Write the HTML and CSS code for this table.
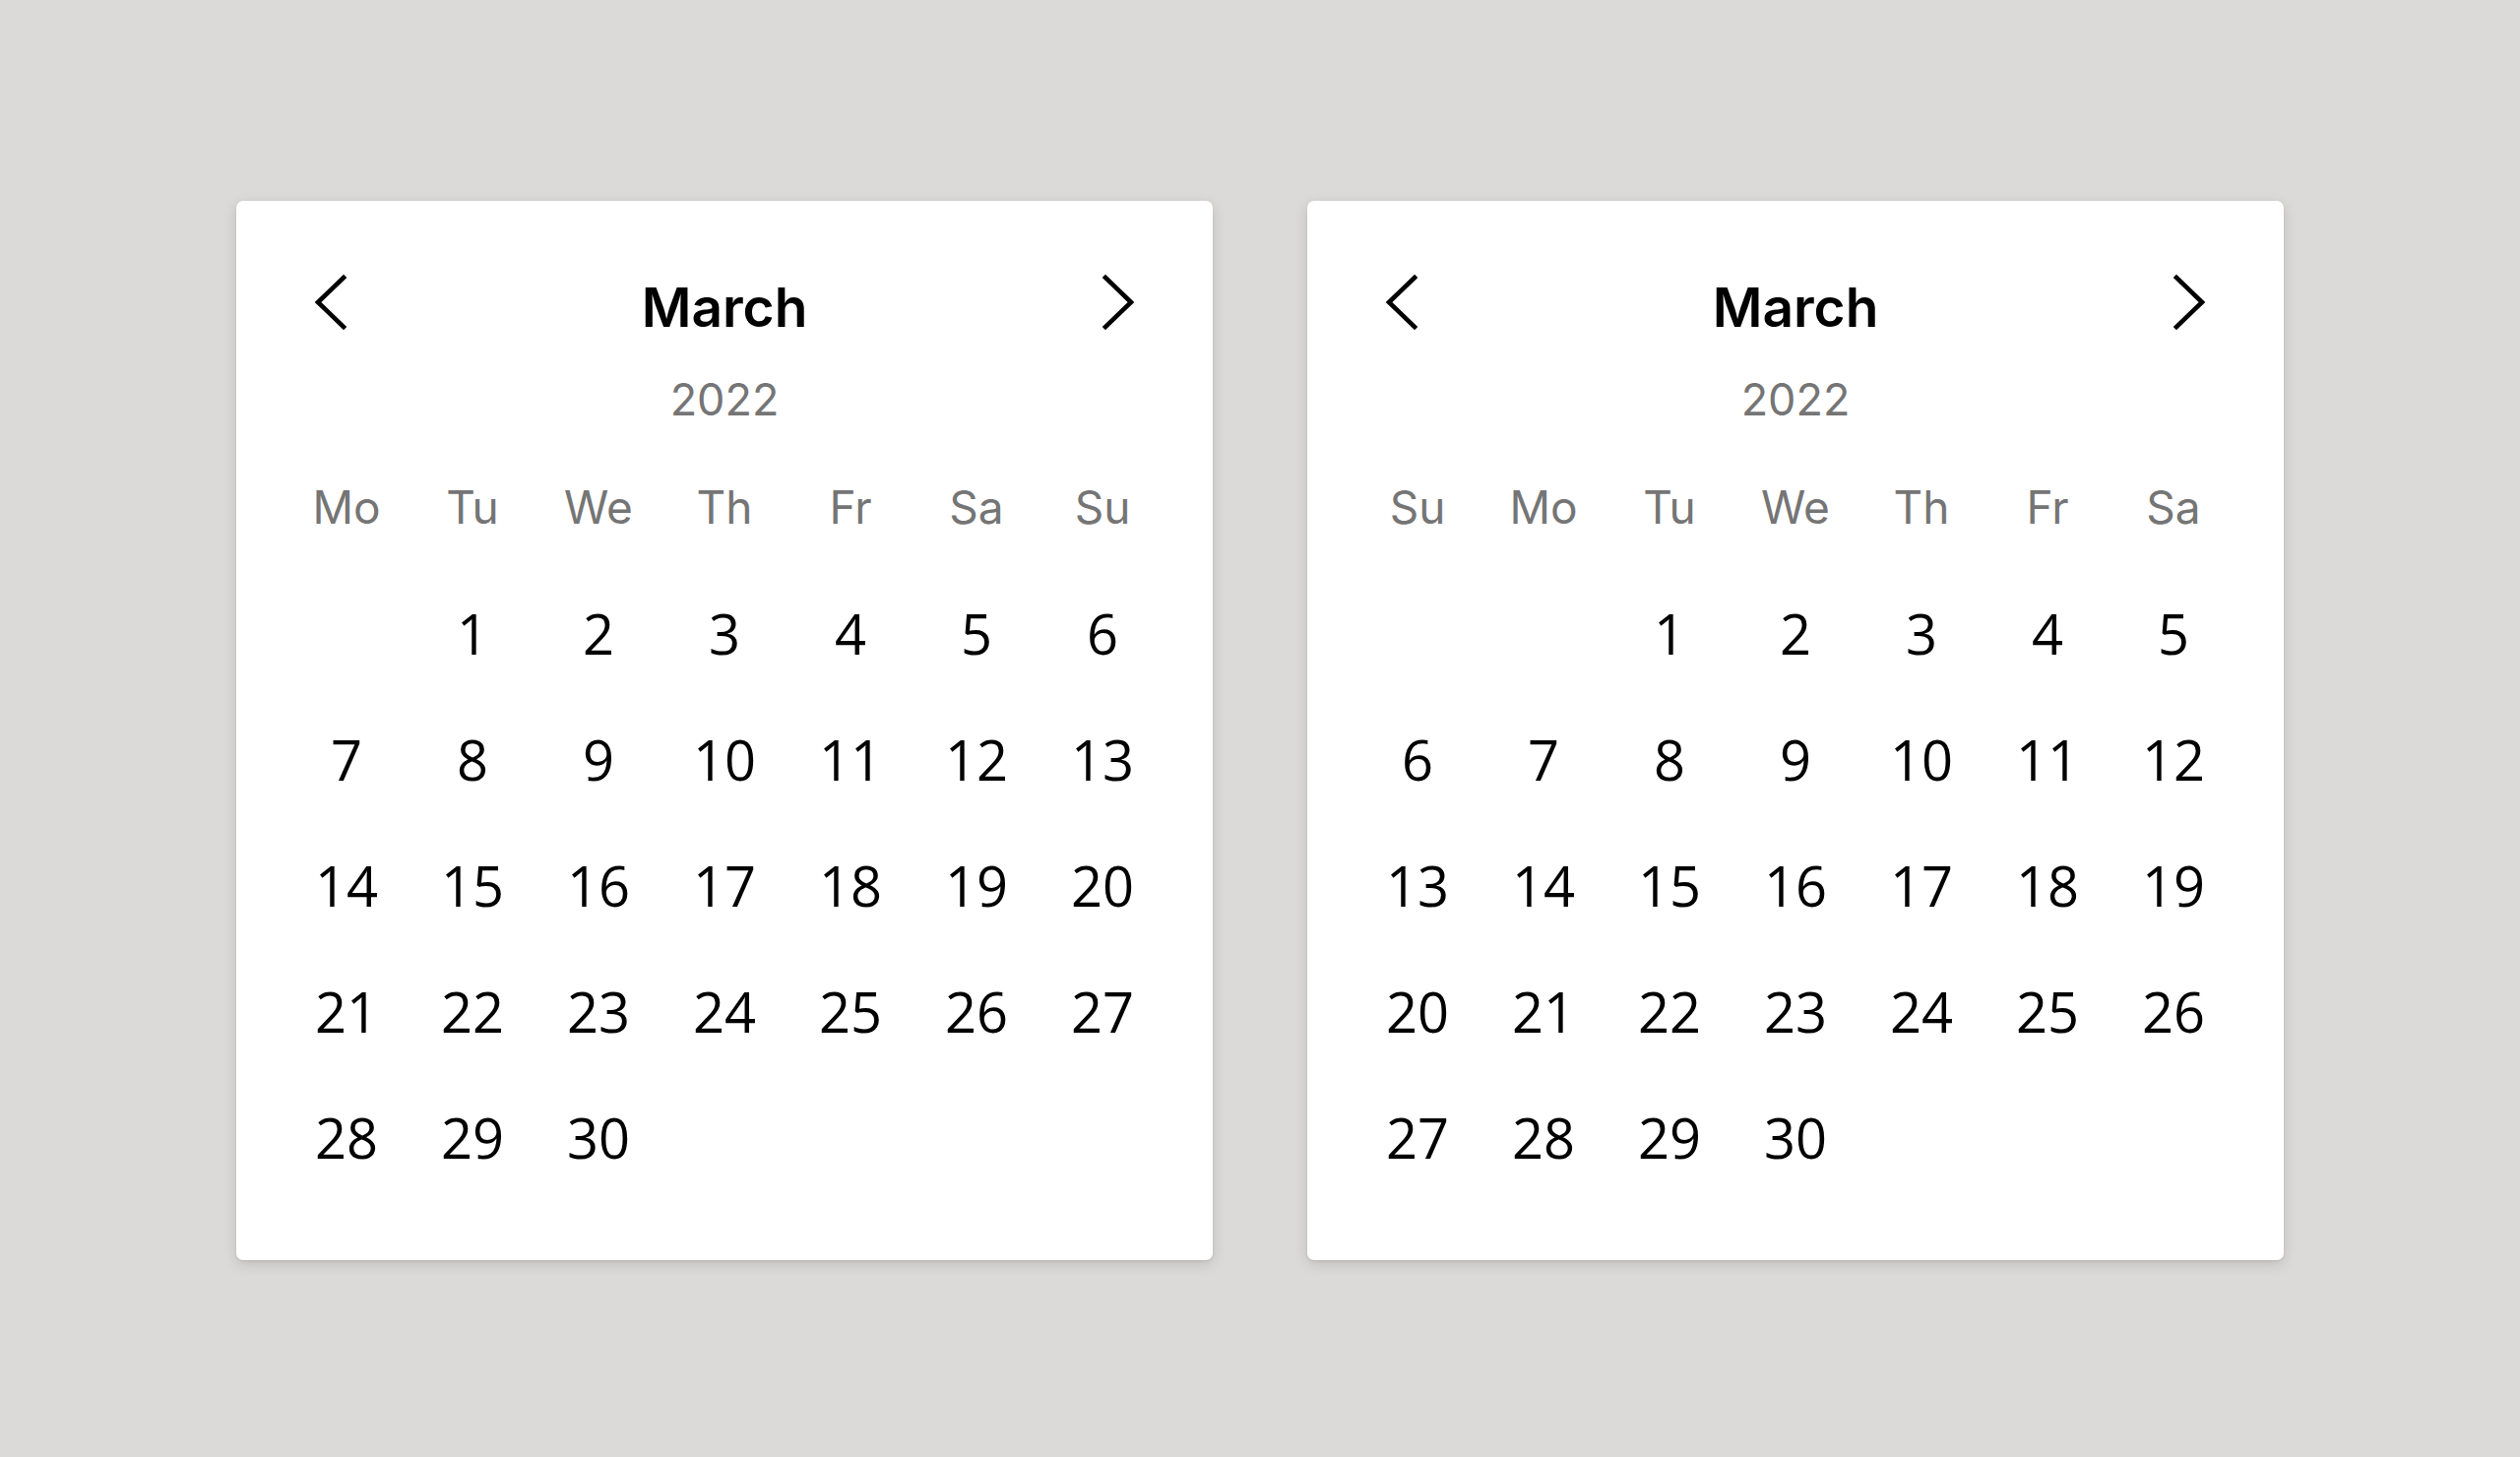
FILE: index.html
```html
<!DOCTYPE html>
<html lang="en">
<head>
<meta charset="utf-8">
<title>Calendars</title>
<link rel="stylesheet" href="styles.css">
</head>
<body>
<main class="stage">
  <section class="card">
    <header class="head">
      <button class="nav" aria-label="Previous month">
        <svg width="34" height="58" viewBox="0 0 34 58"><path d="M30 4 L4 29 L30 54" fill="none" stroke="#000" stroke-width="4.6" stroke-linecap="square" stroke-linejoin="miter"/></svg>
      </button>
      <div class="title">
        <div class="month">March</div>
        <div class="year">2022</div>
      </div>
      <button class="nav" aria-label="Next month">
        <svg width="34" height="58" viewBox="0 0 34 58"><path d="M4 4 L30 29 L4 54" fill="none" stroke="#000" stroke-width="4.6" stroke-linecap="square" stroke-linejoin="miter"/></svg>
      </button>
    </header>
    <div class="grid">
      <div class="wd">Mo</div><div class="wd">Tu</div><div class="wd">We</div><div class="wd">Th</div><div class="wd">Fr</div><div class="wd">Sa</div><div class="wd">Su</div>
      <div class="day"></div><div class="day">1</div><div class="day">2</div><div class="day">3</div><div class="day">4</div><div class="day">5</div><div class="day">6</div>
      <div class="day">7</div><div class="day">8</div><div class="day">9</div><div class="day">10</div><div class="day">11</div><div class="day">12</div><div class="day">13</div>
      <div class="day">14</div><div class="day">15</div><div class="day">16</div><div class="day">17</div><div class="day">18</div><div class="day">19</div><div class="day">20</div>
      <div class="day">21</div><div class="day">22</div><div class="day">23</div><div class="day">24</div><div class="day">25</div><div class="day">26</div><div class="day">27</div>
      <div class="day">28</div><div class="day">29</div><div class="day">30</div>
    </div>
  </section>
  <section class="card">
    <header class="head">
      <button class="nav" aria-label="Previous month">
        <svg width="34" height="58" viewBox="0 0 34 58"><path d="M30 4 L4 29 L30 54" fill="none" stroke="#000" stroke-width="4.6" stroke-linecap="square" stroke-linejoin="miter"/></svg>
      </button>
      <div class="title">
        <div class="month">March</div>
        <div class="year">2022</div>
      </div>
      <button class="nav" aria-label="Next month">
        <svg width="34" height="58" viewBox="0 0 34 58"><path d="M4 4 L30 29 L4 54" fill="none" stroke="#000" stroke-width="4.6" stroke-linecap="square" stroke-linejoin="miter"/></svg>
      </button>
    </header>
    <div class="grid">
      <div class="wd">Su</div><div class="wd">Mo</div><div class="wd">Tu</div><div class="wd">We</div><div class="wd">Th</div><div class="wd">Fr</div><div class="wd">Sa</div>
      <div class="day"></div><div class="day"></div><div class="day">1</div><div class="day">2</div><div class="day">3</div><div class="day">4</div><div class="day">5</div>
      <div class="day">6</div><div class="day">7</div><div class="day">8</div><div class="day">9</div><div class="day">10</div><div class="day">11</div><div class="day">12</div>
      <div class="day">13</div><div class="day">14</div><div class="day">15</div><div class="day">16</div><div class="day">17</div><div class="day">18</div><div class="day">19</div>
      <div class="day">20</div><div class="day">21</div><div class="day">22</div><div class="day">23</div><div class="day">24</div><div class="day">25</div><div class="day">26</div>
      <div class="day">27</div><div class="day">28</div><div class="day">29</div><div class="day">30</div>
    </div>
  </section>
</main>
</body>
</html>
```

FILE: styles.css
```css
html, body {
  margin: 0;
  padding: 0;
}
body {
  background: #dbdad8;
  width: 2560px;
  height: 1480px;
  overflow: hidden;
}
.stage {
  display: flex;
  justify-content: center;
  gap: 96px;
  padding-top: 204px;
}
.card {
  width: 992px;
  height: 1076px;
  box-sizing: border-box;
  background: #fff;
  border-radius: 7px;
  box-shadow: 0 4px 14px rgba(0, 0, 0, 0.13), 0 1px 3px rgba(0, 0, 0, 0.08);
  padding: 76px 48px 0 48px;
}
.head {
  display: flex;
  align-items: flex-start;
  justify-content: space-between;
}
.nav {
  width: 96px;
  height: 58px;
  margin-top: -2px;
  padding: 0;
  border: 0;
  background: none;
  display: flex;
  align-items: center;
  justify-content: center;
}
.nav svg {
  display: block;
}
.title {
  display: flex;
  flex-direction: column;
  align-items: center;
}
.month {
  font-family: Inter, "Liberation Sans", sans-serif;
  font-weight: 600;
  font-size: 55px;
  line-height: 64px;
  color: #000;
}
.year {
  margin-top: 34px;
  font-family: Inter, "Liberation Sans", sans-serif;
  font-size: 45px;
  line-height: 56px;
  color: #757575;
}
.grid {
  margin-top: 17px;
  display: grid;
  grid-template-columns: repeat(7, 128px);
  grid-auto-rows: 128px;
}
.wd {
  font-family: Inter, "Liberation Sans", sans-serif;
  font-size: 46px;
  line-height: 128px;
  text-align: center;
  color: #757575;
}
.day {
  font-family: "Open Sans", "Noto Sans", sans-serif;
  font-size: 56px;
  line-height: 128px;
  text-align: center;
  color: #000;
}
```
